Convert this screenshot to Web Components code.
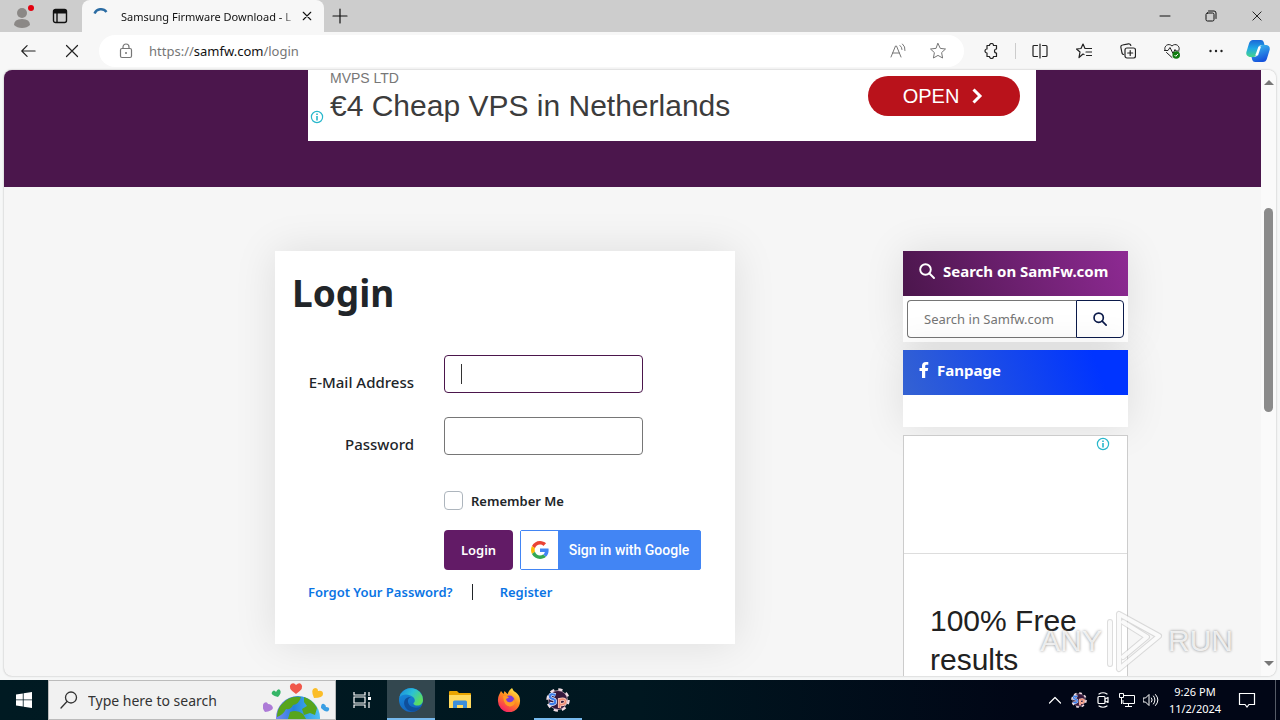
<!DOCTYPE html>
<html lang="en">
<head>
<meta charset="utf-8">
<meta name="viewport" content="width=device-width, initial-scale=1">
<title>Samsung Firmware Download - Login</title>
<style>
html, body {
  margin: 0;
  height: 100%;
}

body {
  display: flex;
  flex-direction: column;
  overflow: hidden;
  background: #f6f7f7;
  color: #212529;
  font-family: "Noto Sans", "Open Sans", sans-serif;
  font-size: 14px;
}
</style>
</head>
<body>
<browser-tabs>Samsung Firmware Download - L</browser-tabs>
<browser-toolbar></browser-toolbar>
<page-view>
  <ad-banner slot="banner" advertiser="MVPS LTD" action="OPEN">€4 Cheap VPS in Netherlands</ad-banner>
  <login-card></login-card>
  <side-panel slot="aside" tone="purple" icon="search">
    <span slot="title">Search on SamFw.com</span>
    <site-search></site-search>
  </side-panel>
  <side-panel slot="aside" tone="blue" icon="facebook">
    <span slot="title">Fanpage</span>
  </side-panel>
  <text-ad slot="aside">100% Free results</text-ad>
</page-view>
<task-bar></task-bar>

<script>
const line = 'fill="none" stroke="currentColor" stroke-linecap="round" stroke-linejoin="round"';

// [viewBox, markup]
const icons = {
  avatar: ['0 0 24 24', '<circle cx="11" cy="9" r="5" fill="#8b8886"/><path d="M3 21q0-6 8-6t8 6q-3 3-8 3t-8-3z" fill="#8b8886"/><circle cx="20" cy="4" r="3" fill="#e3000f"/>'],
  workspace: ['0 0 16 16', `<g ${line} stroke-width="1.4"><rect x="1.5" y="1.5" width="13" height="13" rx="2"/><path d="M5 5v9"/></g><path d="M1.5 2h13v3.5h-13z" fill="currentColor"/>`],
  spinner: ['0 0 16 16', '<path d="M1.500 5.500A7 7 0 0 1 13.500 4" fill="none" stroke="#2b6ca3" stroke-width="2.400"/>'],
  close: ['0 0 16 16', `<path d="M3 3l10 10M13 3L3 13" ${line} stroke-width="1.5"/>`],
  plus: ['0 0 16 16', `<path d="M8 1v14M1 8h14" ${line} stroke-width="1.2"/>`],
  minimize: ['0 0 12 12', `<path d="M1 6h10" ${line}/>`],
  restore: ['0 0 12 12', `<g ${line}><rect x="1" y="3" width="8" height="8" rx="1.500"/><path d="M3.500 1h5.500a2 2 0 0 1 2 2v5.500"/></g>`],
  back: ['0 0 18 18', `<path d="M17 9H2M8 3L2 9l6 6" ${line} stroke-width="1.300"/>`],
  stop: ['0 0 16 16', `<path d="M2.500 2.500l11 11M13.500 2.500l-11 11" ${line} stroke-width="1.200"/>`],
  lock: ['0 0 16 16', `<g ${line} stroke-width="1.200"><rect x="2.500" y="5.500" width="11" height="9" rx="1.500"/><path d="M5 5.500V4a3 3 0 0 1 6 0v1.500"/></g><circle cx="8" cy="10" r="1" fill="currentColor"/>`],
  readAloud: ['0 0 16 16', `<path d="M1 14L5.500 3h1L11 14M2.500 10h7M10 2.500q2 1.500 2 4M12.500 1q3 2.500 2.500 6.500" ${line}/>`],
  star: ['0 0 16 16', `<path d="M8 .5l2.300 4.900 5.200.6-3.900 3.600 1 5.400L8 12.400 3.400 15l1-5.400L.5 6l5.200-.6z" ${line}/>`],
  puzzle: ['0 0 16 16', `<path d="M4 2.500h2.500a2 2 0 0 1 4 0h3v3.500a2 2 0 1 0 0 4v3.500h-3a2 2 0 0 1-4 0H4V10a2 2 0 1 1 0-4z" ${line} stroke-width="1.200"/>`],
  split: ['0 0 16 16', `<path d="M5.500 2.500H2a1 1 0 0 0-1 1v9a1 1 0 0 0 1 1h3.500M10.500 2.500H14a1 1 0 0 1 1 1v9a1 1 0 0 1-1 1h-3.500M8 1v14" ${line} stroke-width="1.200"/>`],
  favorites: ['0 0 16 16', `<path d="M8 11.500l-1-.5-4 3.500 1-5.500L.5 6l4.500-.5L7 1l2 4.500h6.500M10 9h5.500M10.500 12.500h5" ${line} stroke-width="1.200"/>`],
  collections: ['0 0 16 16', `<g ${line} stroke-width="1.200"><rect x="5" y="5" width="10.500" height="10" rx="2"/><path d="M10.200 7.500v5M7.700 10h5M3.500 11.500A2 2 0 0 1 2 10L.8 4A2 2 0 0 1 2.500 2l6-1.200a2 2 0 0 1 2.300 1.700"/></g>`],
  essentials: ['0 0 16 16', `<path d="M1 7C-.5 3 4.500-.5 8 3c3.500-3.500 8.500 0 7 4M2.500 9.500L8 14.500M.5 7.500H4l2-3 3 6 2-4 1 1.500h3" ${line}/><circle cx="12.200" cy="12" r="3.800" fill="#107c10"/><path d="M10.500 12l1.300 1.300 2.200-2.400" fill="none" stroke="#fff"/>`],
  more: ['0 0 16 16', '<g fill="currentColor"><circle cx="2.500" cy="8" r="1.200"/><circle cx="8" cy="8" r="1.200"/><circle cx="13.500" cy="8" r="1.200"/></g>'],
  copilot: ['0 0 24 24', `<defs><linearGradient id="a" x2="0" y2="1"><stop stop-color="#1b67d8"/><stop offset=".5" stop-color="#20a9e5"/><stop offset="1" stop-color="#47d58a"/></linearGradient><linearGradient id="b" x2=".4" y2="1"><stop stop-color="#3dc7ef"/><stop offset="1" stop-color="#1653dc"/></linearGradient></defs>
    <path d="M7 1h8q2 0 2.700 2l.8 3h-3q-2 0-2.700 2l-2.300 8q-.7 2-3 2H3.500Q-.5 17 .4 13L3 4.500Q4 1 7 1z" fill="url(#a)"/><path d="M17 23H9q-2 0-2.700-2l-.8-3h3q2 0 2.700-2l2.300-8q.7-2 3-2h4q4 1 3.100 5L21 19.500q-1 3.500-4 3.500z" fill="url(#b)"/><path d="M12.500 7.500h2.500l-3 9H9.200z" fill="#fff"/>`],
  info: ['0 0 14 14', '<circle cx="7" cy="7" r="5.600" fill="#fff" stroke="#28b7cb" stroke-width="1.200"/><path d="M7 6v4.500M7 3.400v1.500" stroke="#28b7cb" stroke-width="1.600"/>'],
  chevron: ['0 0 16 16', '<path d="M4.500 1.500L11 8l-6.500 6.500" fill="none" stroke="currentColor" stroke-width="3"/>'],
  search: ['0 0 16 16', `<g ${line} stroke-width="1.900"><circle cx="6.500" cy="6.500" r="5.300"/><path d="M10.500 10.500l4.500 4.500"/></g>`],
  facebook: ['0 0 10 16', '<path d="M3 16V9H.5V6H3V4q0-4 4-4h2.300v2.800H7.500Q6.200 2.800 6.200 4v2h3l-.5 3H6.200v7z" fill="currentColor"/>'],
  google: ['0 0 48 48', '<path fill="#ea4335" d="M24 9.500c3.540 0 6.710 1.220 9.210 3.600l6.850-6.850C35.900 2.380 30.470 0 24 0 14.620 0 6.510 5.380 2.560 13.220l7.980 6.190C12.430 13.720 17.740 9.500 24 9.500z"/><path fill="#4285f4" d="M46.980 24.550c0-1.570-.15-3.090-.38-4.550H24v9.020h12.940c-.58 2.960-2.260 5.480-4.780 7.180l7.730 6c4.510-4.180 7.090-10.360 7.090-17.650z"/><path fill="#fbbc05" d="M10.530 28.590c-.48-1.450-.76-2.990-.76-4.590s.27-3.140.76-4.590l-7.980-6.190C.92 16.460 0 20.120 0 24c0 3.880.92 7.540 2.560 10.780l7.970-6.190z"/><path fill="#34a853" d="M24 48c6.480 0 11.930-2.130 15.890-5.810l-7.730-6c-2.150 1.450-4.920 2.300-8.160 2.300-6.260 0-11.570-4.220-13.470-9.910l-7.980 6.190C6.510 42.620 14.620 48 24 48z"/>'],
  windows: ['0 0 16 16', '<path d="M0 2.400l6.800-1v6.100H0zM7.600 1.300L16 0v7.500H7.600zM0 8.300h6.800v6.200L0 13.500zM7.600 8.300H16V16l-8.400-1.300z" fill="#fff"/>'],
  find: ['0 0 18 18', `<g ${line} stroke-width="1.300"><circle cx="11" cy="6.500" r="5.500"/><path d="M7 10.500L1 17"/></g>`],
  taskView: ['0 0 18 18', '<path d="M1 1v3h11V1M1 17v-3h11v3M1 6h11v6H1zM16 1v4M16 11v6" fill="none" stroke="#fff" stroke-width="1.200"/><path d="M15 6h3v3h-3z" fill="#fff"/>'],
  edge: ['0 0 24 24', `<defs><linearGradient id="a" x1=".1" x2="1" y2=".5"><stop stop-color="#1b8fdd"/><stop offset=".5" stop-color="#2bc0d6"/><stop offset="1" stop-color="#5bdc62"/></linearGradient><linearGradient id="b" x2=".3" y2="1"><stop stop-color="#1791e0"/><stop offset="1" stop-color="#1465bf"/></linearGradient></defs>
    <circle cx="12" cy="12" r="12" fill="url(#b)"/><path d="M.3 9.500A12 12 0 0 1 24 12c0 3.500-2.500 5.500-5.500 5.500-2.500 0-4.500-1-4-2.500 2-1.500 1.500-4.500-.5-6C10 5.500 3 5.500.3 9.500z" fill="url(#a)"/><path d="M9 14c-.5-2.500 1-4.500 3-5-5-.5-8 3.500-6.500 8.500 1.500 4 5.500 6.500 10 6 3-.8 5-2.500 6.500-5C17 21 10 19.500 9 14z" fill="#0f4f9b"/>`],
  explorer: ['0 0 24 20', '<path d="M1 2q0-1 1-1h7l2 2h11q1 0 1 1v14H1z" fill="#e9a400"/><path d="M1 5h22v13H1z" fill="#ffd95e"/><path d="M5 18v-6q0-1.500 1.500-1.500h11Q19 10.500 19 12v6h-4v-3H9v3z" fill="#3c8edb"/>'],
  firefox: ['0 0 24 24', `<defs><linearGradient id="a" x1=".8" x2=".2" y2="1"><stop stop-color="#fff04b"/><stop offset=".45" stop-color="#ff8a1d"/><stop offset="1" stop-color="#f5156c"/></linearGradient></defs>
    <path d="M2 7l2-4 2.500 3 1-3 3 3Q12 2 15 0q1 3 4 4.500 4.500 3.500 4 9A11 11 0 0 1 1 13q-.3-3.500 1-6z" fill="url(#a)"/><circle cx="12.500" cy="12.500" r="5" fill="#7d3bd8"/><path d="M6 8q4-1 6 1.500l-3 1.500q1 4 5 3 3-1 3-4 3 7-3.500 8.500Q7 19 6 8z" fill="#ff9a24"/>`],
  gear: ['0 0 24 24', '<circle cx="12" cy="12" r="10" fill="none" stroke="#f2dfe5" stroke-width="3.500" stroke-dasharray="4 3.850"/><circle cx="12" cy="12" r="9.500" fill="#36183c" stroke="#e9cfd9" stroke-width=".6"/><path d="M9.500 7q-5.500-2-5.500 1.500 0 2 3 2.500t2 4Q7 17 3.500 15.500" fill="none" stroke="#dfeaff" stroke-width="3.600"/><path d="M9.500 7q-5.500-2-5.500 1.500 0 2 3 2.500t2 4Q7 17 3.500 15.500" fill="none" stroke="#3d7ce8" stroke-width="2.200"/><path d="M13.500 20v-8.500q6-1.500 6 2t-5.500 3" fill="none" stroke="#ffd9cc" stroke-width="3.200"/><path d="M13.500 20v-8.500q6-1.500 6 2t-5.500 3" fill="none" stroke="#ef8d76" stroke-width="1.800"/>'],
  caretUp: ['0 0 16 16', `<path d="M2.500 11L8 5.500l5.500 5.500" ${line} stroke-width="1.200"/>`],
  camera: ['0 0 16 16', `<g ${line} stroke-width="1.200"><rect x="3" y="4.500" width="7" height="7" rx="1"/><path d="M10 7l3-1.500v5L10 9M4 2q4-2.500 8 0M4 14q4 2.500 8 0"/></g>`],
  network: ['0 0 16 16', '<path d="M5 3.500h10.500v8H4V8M9.500 11.500v3M6 14.500h7M.5 1.500h4v4h-4zM2.500 5.500V12" fill="none" stroke="currentColor"/>'],
  volume: ['0 0 16 16', `<path d="M.5 6h2l3.500-3.500v11L2.500 10h-2zM8.500 6q1.500 2 0 4M10.500 4q3 4 0 8M12.500 2.500q5 5.500 0 11" ${line}/>`],
  notification: ['0 0 18 18', '<path d="M1.500 2.500h15v11H11l-2 2.500-2-2.500H1.500z" fill="none" stroke="currentColor" stroke-width="1.200"/>'],
  earth: ['0 0 72 38', `<defs><linearGradient id="a" x2="1"><stop stop-color="#7a87f0"/><stop offset=".4" stop-color="#2582dc"/><stop offset="1" stop-color="#4fc1f5"/></linearGradient></defs>
    <circle cx="35" cy="37" r="22" fill="url(#a)"/><path d="M18 24q8-10 20-8-2 7-8 8-2 5-7 4-3 6-9 8 0-7 4-12zM41 16q9 3 13 11l-2 7-5-2-6 2-2-6 5-3-3-4zM27 31q7-3 13 2l3 5H25z" fill="#57a51c"/>
    <path d="M33 13q-9-6-5-10 3-2 5 1 3-3 5-1 4 4-5 10z" fill="#f0574a"/><path d="M15 16q-8-2-6-5 2-3 4 0 2-4 4-2 2 3-2 7z" fill="#35b567"/><path d="M51 17q-4-9 1-10 3 0 3 3 5-1 5 3t-9 4z" fill="#fbbd27"/><path d="M2 31q-4-5-1-9 3-2 4 1 4 0 5 4-1 3-8 4z" fill="#ad7bd7"/><path d="M58 27q0-5 3-4 2 1 2 3 4 0 3 3-2 4-8-2z" fill="#3a9fe4"/>`],
  play: ['0 0 60 66', '<g fill="none" stroke-linejoin="round" stroke-linecap="round"><path d="M5 14v42M14 6v54M14 6l40 22-40 33M18 14l24 15-24 20" stroke="#bbb" stroke-opacity=".5" stroke-width="6"/><path d="M5 14v42M14 6v54M14 6l40 22-40 33M18 14l24 15-24 20" stroke="#fff" stroke-opacity=".85" stroke-width="4"/></g>'],
};

class UiIcon extends HTMLElement {
  connectedCallback() {
    const [viewBox, markup] = icons[this.getAttribute('name')];
    this.attachShadow({ mode: 'open' }).innerHTML = `
<style>
:host { display: inline-flex; flex: none; width: 16px; height: 16px; }
svg { width: 100%; height: 100%; }
</style>
<svg viewBox="${viewBox}" aria-hidden="true">${markup}</svg>`;
  }
}

// Shared base: each element only supplies its own markup.
class BaseElement extends HTMLElement {
  connectedCallback() {
    if (this.shadowRoot) return;
    const template = document.createElement('template');
    template.innerHTML = `
<style>
:host, * { box-sizing: border-box; }
button {
  display: flex;
  align-items: center;
  justify-content: center;
  margin: 0;
  padding: 0;
  border: 0;
  background: none;
  color: inherit;
  font: inherit;
}
</style>${this.render()}`;
    this.attachShadow({ mode: 'open' }).appendChild(template.content.cloneNode(true));
  }
}

class BrowserTabs extends BaseElement {
  render() {
    return `
<style>
:host { display: flex; flex: none; height: 32px; background: #cdcdcd; color: #111; font-size: 11px; }
.account { display: flex; align-items: center; gap: 17px; width: 82px; padding-left: 11px; }
.account ui-icon[name=avatar] { width: 24px; height: 24px; }
.tab { display: flex; align-items: center; width: 242px; padding: 0 8px 0 11px; background: #f7f7f7; border-radius: 8px 8px 0 0; }
.title {
  flex: 1;
  margin-left: 12px;
  overflow: hidden;
  white-space: nowrap;
  mask-image: linear-gradient(to left, transparent, #000 16px);
}
.tab button { width: 18px; height: 24px; }
.tab button ui-icon { width: 12px; height: 12px; }
.new { width: 32px; }
.window { display: flex; margin-left: auto; }
.window button { width: 46px; }
.window ui-icon { width: 12px; height: 12px; }
</style>
<div class="account">
  <button aria-label="Profile"><ui-icon name="avatar"></ui-icon></button>
  <button aria-label="Tab actions"><ui-icon name="workspace"></ui-icon></button>
</div>
<div class="tab">
  <ui-icon name="spinner"></ui-icon>
  <span class="title"><slot></slot></span>
  <button aria-label="Close tab"><ui-icon name="close"></ui-icon></button>
</div>
<button class="new" aria-label="New tab"><ui-icon name="plus"></ui-icon></button>
<div class="window">
  <button aria-label="Minimize"><ui-icon name="minimize"></ui-icon></button>
  <button aria-label="Restore"><ui-icon name="restore"></ui-icon></button>
  <button aria-label="Close"><ui-icon name="stop"></ui-icon></button>
</div>`;
  }
}

class BrowserToolbar extends BaseElement {
  render() {
    const tools = ['split', 'favorites', 'collections', 'essentials', 'more'];
    return `
<style>
:host { display: flex; flex: none; align-items: center; height: 38px; padding: 0 2px 0 6px; background: #f7f7f7; color: #222; font-size: 13px; }
button { width: 44px; height: 32px; }
.address {
  display: flex;
  flex: 1;
  align-items: center;
  height: 32px;
  margin: 0 5px;
  padding: 0 6px 0 19px;
  border-radius: 16px;
  background: #fff;
  color: #767676;
}
.address button { width: 40px; }
.url { flex: 1; margin-left: 15px; }
.url b { color: #111; font-weight: 400; }
.rule { width: 1px; height: 16px; margin: 0 2px; background: #ccc; }
.copilot { width: 40px; }
.copilot ui-icon { width: 24px; height: 24px; }
</style>
<button aria-label="Back"><ui-icon name="back"></ui-icon></button>
<button aria-label="Stop"><ui-icon name="stop"></ui-icon></button>
<div class="address">
  <ui-icon name="lock"></ui-icon>
  <span class="url">https://<b>samfw.com</b>/login</span>
  <button aria-label="Read aloud"><ui-icon name="readAloud"></ui-icon></button>
  <button aria-label="Add to favorites"><ui-icon name="star"></ui-icon></button>
</div>
<button aria-label="Extensions"><ui-icon name="puzzle"></ui-icon></button>
<span class="rule"></span>
${tools.map((name) => `<button aria-label="${name}"><ui-icon name="${name}"></ui-icon></button>`).join('')}
<button class="copilot" aria-label="Copilot"><ui-icon name="copilot"></ui-icon></button>`;
  }
}

class PageView extends BaseElement {
  render() {
    return `
<style>
:host {
  position: relative;
  display: flex;
  flex: 1;
  min-height: 0;
  margin: 0 4px 4px;
  overflow: hidden;
  border-radius: 8px;
  background: #f6f6f6;
  box-shadow: 0 0 2px #aaa;
}
.page { flex: 1; min-width: 0; overflow: hidden; }
.hero {
  display: grid;
  grid-template-columns: 304fr auto 225fr;
  height: 117px;
  background: #4b164c;
}
.hero ::slotted(*) { grid-column: 2; }
.content {
  display: grid;
  grid-template-columns: 271fr minmax(0, 460fr) 168fr minmax(0, 225fr) 133fr;
  align-items: start;
  padding-top: 64px;
}
main { grid-column: 2; }
aside { display: grid; grid-column: 4; grid-template-columns: minmax(0, 1fr); gap: 8px; }
.scroll {
  display: flex;
  flex-direction: column;
  align-items: center;
  width: 15px;
  padding: 10px 0;
  background: #fafafa;
}
.scroll i { border: 5px solid transparent; border-top: 0; border-bottom-color: #777; }
.scroll i:last-child { border-top: 5px solid #777; border-bottom: 0; }
.track { flex: 1; width: 9px; padding-top: 123px; }
.thumb { height: 204px; border-radius: 5px; background: #8b8b8b; }
.mark {
  position: absolute;
  right: 43px;
  bottom: 2px;
  display: flex;
  align-items: center;
  gap: 3px;
  color: #fffc;
  font: 30px/30px "Liberation Sans", sans-serif;
  text-shadow: 0 0 3px #888;
}
.mark ui-icon { width: 60px; height: 66px; }
</style>
<div class="page">
  <header class="hero"><slot name="banner"></slot></header>
  <div class="content">
    <main><slot></slot></main>
    <aside><slot name="aside"></slot></aside>
  </div>
</div>
<div class="scroll"><i></i><div class="track"><div class="thumb"></div></div><i></i></div>
<div class="mark"><span>ANY</span><ui-icon name="play"></ui-icon><span>RUN</span></div>`;
  }
}

class AdBanner extends BaseElement {
  render() {
    return `
<style>
:host {
  display: flex;
  justify-content: space-between;
  width: 728px;
  height: 71px;
  padding: 0 16px 0 2px;
  background: #fff;
  color: #3c3c3c;
  font-family: "Liberation Sans", sans-serif;
}
.info { width: 14px; height: 14px; align-self: flex-end; margin-bottom: 17px; }
.text { flex: 1; margin-left: 6px; white-space: nowrap; }
.advertiser { color: #777; font-size: 14px; line-height: 16px; }
.headline { font-size: 30px; line-height: 40px; }
.action { gap: 10px; width: 152px; height: 40px; margin-top: 6px; border-radius: 20px; background: #b9121b; color: #fff; font-size: 20px; }
</style>
<ui-icon class="info" name="info"></ui-icon>
<div class="text">
  <div class="advertiser">${this.getAttribute('advertiser')}</div>
  <div class="headline"><slot></slot></div>
</div>
<button class="action">${this.getAttribute('action')}<ui-icon name="chevron"></ui-icon></button>`;
  }
}

class LoginCard extends BaseElement {
  render() {
    return `
<style>
:host {
  display: block;
  padding: 18px 17px 42px;
  background: #fff;
  box-shadow: 0 0 40px #0000001a;
  font-weight: 600;
}
h1 { margin: 0 0 38px; font-size: 37px; line-height: 48px; font-weight: 700; }
form { display: grid; grid-template-columns: 122px 1fr; column-gap: 30px; }
.label { padding-top: 15px; font-size: 15px; line-height: 24px; font-weight: 500; text-align: right; white-space: nowrap; }
.field {
  width: 199px;
  height: 38px;
  margin-bottom: 24px;
  padding: 0 16px;
  border: 1px solid #767676;
  border-radius: 4px;
  background: #fff;
  font: inherit;
  outline: 0;
}
/* the e-mail box is the one being typed in */
#email {
  border-color: #4b164c;
  background: linear-gradient(#333, #333) 16px 50% / 1px 20px no-repeat;
}
.remember { display: flex; grid-column: 2; align-items: center; gap: 8px; height: 19px; margin: 12px 0 20px; font-size: 13px; }
.remember input { width: 19px; height: 19px; margin: 0; appearance: none; border: 1px solid #adb5bd; border-radius: 4px; background: #fff; }
.buttons { display: flex; grid-column: 2; gap: 7px; }
.buttons button { height: 40px; white-space: nowrap; }
.login { width: 69px; border-radius: 4px; background: #621b66; color: #fff; font-size: 13px; }
.google { width: 181px; border: 1px solid #4285f4; border-radius: 2px; background: #4285f4; color: #fff; font: 500 14px Roboto, sans-serif; }
.google i { display: flex; align-items: center; justify-content: center; width: 37px; height: 38px; background: #fff; }
.google ui-icon { width: 18px; height: 18px; }
.google span { flex: 1; }
.links { display: flex; align-items: center; margin: 12px 0 0 16px; font-size: 13px; line-height: 20px; white-space: nowrap; }
.links a { color: #0a74e4; text-decoration: none; }
.links i { width: 1px; height: 16px; margin: 0 27px 0 19px; background: #212529; }
</style>
<h1>Login</h1>
<form>
  <label class="label" for="email">E-Mail Address</label>
  <input class="field" id="email" type="email">
  <label class="label" for="password">Password</label>
  <input class="field" id="password" type="password">
  <label class="remember"><input type="checkbox">Remember Me</label>
  <div class="buttons">
    <button class="login" type="submit">Login</button>
    <button class="google" type="button"><i><ui-icon name="google"></ui-icon></i><span>Sign in with Google</span></button>
  </div>
</form>
<div class="links"><a href="#forgot">Forgot Your Password?</a><i></i><a href="#register">Register</a></div>`;
  }
}

class SidePanel extends BaseElement {
  render() {
    return `
<style>
:host { display: block; background: #fff; box-shadow: 0 0 40px #0000001a; }
h2 {
  display: flex;
  align-items: center;
  gap: 8px;
  height: 45px;
  margin: 0;
  padding: 0 16px 6px;
  background: linear-gradient(70deg, #4b164c, #8e2a93);
  color: #fff;
  font-size: 15px;
  font-weight: 700;
  white-space: nowrap;
}
:host([tone=blue]) h2 { background: linear-gradient(70deg, #3462d2, #0034ff 85%); }
ui-icon[name=facebook] { width: 10px; }
.body { min-height: 32px; }
</style>
<h2><ui-icon name="${this.getAttribute('icon')}"></ui-icon><slot name="title"></slot></h2>
<div class="body"><slot></slot></div>`;
  }
}

class SiteSearch extends BaseElement {
  render() {
    return `
<style>
:host { display: flex; padding: 4px; }
input {
  flex: 1;
  min-width: 0;
  height: 38px;
  padding: 0 0 0 16px;
  border: 1px solid #767676;
  border-right: 0;
  border-radius: 4px 0 0 4px;
  background: #fff;
  font: inherit;
  font-size: 13px;
}
input::placeholder { color: #757575; }
button { width: 48px; height: 38px; border: 1px solid #0b1a4a; border-radius: 0 4px 4px 0; color: #0b1a4a; }
ui-icon { width: 14px; height: 14px; }
</style>
<input type="text" placeholder="Search in Samfw.com" aria-label="Search">
<button aria-label="Search"><ui-icon name="search"></ui-icon></button>`;
  }
}

class TextAd extends BaseElement {
  render() {
    return `
<style>
:host {
  display: block;
  height: 280px;
  border: 1px solid #ccc;
  background: #fff;
  color: #212121;
  font: 30px/39px "Liberation Sans", sans-serif;
}
.top { display: flex; justify-content: flex-end; height: 118px; padding: 1px 17px; border-bottom: 1px solid #ddd; }
ui-icon { width: 14px; height: 14px; }
p { margin: 0; padding: 47px 26px 0; }
</style>
<div class="top"><ui-icon name="info"></ui-icon></div>
<p><slot></slot></p>`;
  }
}

class TaskBar extends BaseElement {
  render() {
    return `
<style>
:host { display: flex; flex: none; height: 40px; background: linear-gradient(90deg, #001a22, #001720 50%, #010616 80%); color: #fff; }
button { width: 48px; height: 40px; }
.search { display: flex; align-items: center; width: 288px; padding-left: 11px; border: 1px solid #bbb; background: #f1f1f1; color: #333; }
.search input { flex: 1; min-width: 0; padding: 0 0 0 10px; border: 0; background: none; font: inherit; outline: 0; }
.search input::placeholder { color: #333; }
.search ui-icon { width: 18px; height: 18px; }
.search ui-icon.earth { width: 72px; height: 38px; }
.apps { display: flex; gap: 1px; margin-left: 2px; }
.apps ui-icon { width: 24px; height: 24px; }
.apps ui-icon[name=taskView] { width: 18px; height: 18px; }
.apps .open { box-shadow: inset 0 -2px #76b9ed; }
.apps .active { background: #33474f; }
.tray { display: flex; align-items: center; margin-left: auto; }
.tray button { width: 24px; }
.clock { width: 64px; font-size: 11px; line-height: 17px; text-align: center; }
.tray .notes { width: 40px; }
.notes ui-icon { width: 18px; height: 18px; }
.desktop { width: 5px; height: 40px; margin-left: 8px; border-left: 1px solid #555b66; }
</style>
<button aria-label="Start"><ui-icon name="windows"></ui-icon></button>
<div class="search">
  <ui-icon name="find"></ui-icon>
  <input type="text" placeholder="Type here to search" aria-label="Type here to search">
  <ui-icon class="earth" name="earth"></ui-icon>
</div>
<div class="apps">
  <button aria-label="Task view"><ui-icon name="taskView"></ui-icon></button>
  <button class="open active" aria-label="Edge"><ui-icon name="edge"></ui-icon></button>
  <button aria-label="File Explorer"><ui-icon name="explorer"></ui-icon></button>
  <button aria-label="Firefox"><ui-icon name="firefox"></ui-icon></button>
  <button class="open" aria-label="Settings"><ui-icon name="gear"></ui-icon></button>
</div>
<div class="tray">
  <button aria-label="Hidden icons"><ui-icon name="caretUp"></ui-icon></button>
  <button aria-label="Settings"><ui-icon name="gear"></ui-icon></button>
  <button aria-label="Camera"><ui-icon name="camera"></ui-icon></button>
  <button aria-label="Network"><ui-icon name="network"></ui-icon></button>
  <button aria-label="Volume"><ui-icon name="volume"></ui-icon></button>
  <div class="clock">9:26 PM<br>11/2/2024</div>
  <button class="notes" aria-label="Notifications"><ui-icon name="notification"></ui-icon></button>
  <span class="desktop"></span>
</div>`;
  }
}

customElements.define('ui-icon', UiIcon);
customElements.define('browser-tabs', BrowserTabs);
customElements.define('browser-toolbar', BrowserToolbar);
customElements.define('page-view', PageView);
customElements.define('ad-banner', AdBanner);
customElements.define('login-card', LoginCard);
customElements.define('side-panel', SidePanel);
customElements.define('site-search', SiteSearch);
customElements.define('text-ad', TextAd);
customElements.define('task-bar', TaskBar);
</script>
</body>
</html>
